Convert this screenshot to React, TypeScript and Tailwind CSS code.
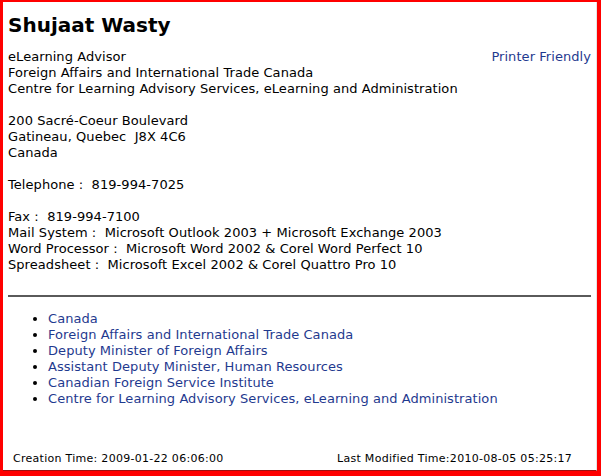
import React from 'react';

const links = [
  'Canada',
  'Foreign Affairs and International Trade Canada',
  'Deputy Minister of Foreign Affairs',
  'Assistant Deputy Minister, Human Resources',
  'Canadian Foreign Service Institute',
  'Centre for Learning Advisory Services, eLearning and Administration',
];

export default function App() {
  return (
    <div className="w-[601px] h-[476px] bg-white border-l-[3px] border-t-[2px] border-r-[4px] border-b-[5px] border-[#ff0000] font-['DejaVu_Sans',Verdana,sans-serif] text-black overflow-hidden">
      <div className="h-full flex flex-col border-r border-b border-r-[#e4e4e4] border-b-[#a01010] pr-[1px]">
        <div className="pl-[5px] pr-[4px]">
          <h1 className="text-[20px] leading-[24px] font-bold mt-[11px]">Shujaat Wasty</h1>

          <div className="mt-[12px] text-[13px] leading-[16px] tracking-[0.06px]">
            <div className="flex justify-between">
              <span>eLearning Advisor</span>
              <a className="text-[#1f3a8f]">Printer Friendly</a>
            </div>
            <div>Foreign Affairs and International Trade Canada</div>
            <div>Centre for Learning Advisory Services, eLearning and Administration</div>
            <div className="h-[16px]" />
            <div>200 Sacré-Coeur Boulevard</div>
            <div>Gatineau, Quebec&nbsp; J8X 4C6</div>
            <div>Canada</div>
            <div className="h-[16px]" />
            <div>Telephone :&nbsp; 819-994-7025</div>
            <div className="h-[16px]" />
            <div>Fax :&nbsp; 819-994-7100</div>
            <div>Mail System :&nbsp; Microsoft Outlook 2003 + Microsoft Exchange 2003</div>
            <div>Word Processor :&nbsp; Microsoft Word 2002 &amp; Corel Word Perfect 10</div>
            <div>Spreadsheet :&nbsp; Microsoft Excel 2002 &amp; Corel Quattro Pro 10</div>
          </div>

          <hr className="mt-[22px] border-0 h-[2px] bg-[#5a5a5a]" />

          <ul className="mt-[14px] pl-[40px] list-disc text-[13px] leading-[16px] tracking-[0.06px] text-[#1f3a8f] marker:text-black">
            {links.map((l) => (
              <li key={l}>
                <a>{l}</a>
              </li>
            ))}
          </ul>
        </div>

        <div className="mt-auto flex justify-between pl-[10px] pr-[23px] pb-[4px] text-[11px] leading-[14px] tracking-[0.28px]">
          <span>Creation Time: 2009-01-22 06:06:00</span>
          <span>Last Modified Time:2010-08-05 05:25:17</span>
        </div>
      </div>
    </div>
  );
}
